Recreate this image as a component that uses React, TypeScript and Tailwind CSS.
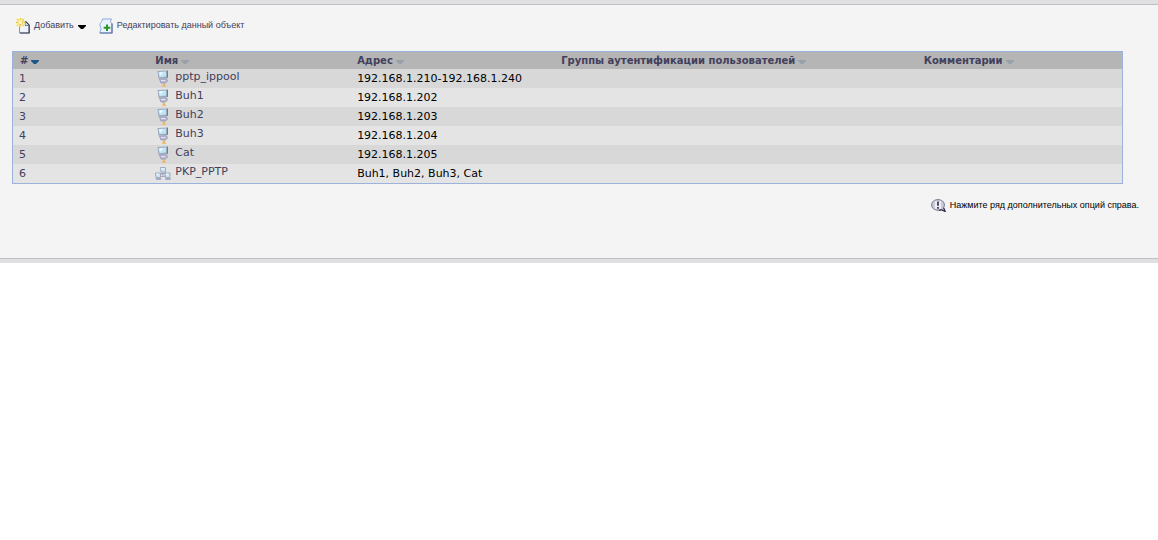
import React from "react";

type Kind = "host" | "group";
type Row = { id: number; kind: Kind; name: string; address: string };

const rows: Row[] = [
  { id: 1, kind: "host", name: "pptp_ippool", address: "192.168.1.210-192.168.1.240" },
  { id: 2, kind: "host", name: "Buh1", address: "192.168.1.202" },
  { id: 3, kind: "host", name: "Buh2", address: "192.168.1.203" },
  { id: 4, kind: "host", name: "Buh3", address: "192.168.1.204" },
  { id: 5, kind: "host", name: "Cat", address: "192.168.1.205" },
  { id: 6, kind: "group", name: "PKP_PPTP", address: "Buh1, Buh2, Buh3, Cat" },
];

const columns = [
  { label: "#", width: "w-[12.2%]", active: true },
  { label: "Имя", width: "w-[18.2%]", active: false },
  { label: "Адрес", width: "w-[18.4%]", active: false },
  { label: "Группы аутентификации пользователей", width: "w-[32.7%]", active: false },
  { label: "Комментарии", width: "w-[18.5%]", active: false },
];

function Arrow({ className }: { className: string }) {
  return (
    <svg viewBox="0 0 8 4" className={`h-1 w-2 shrink-0 fill-current ${className}`} aria-hidden="true">
      <path d="M0 0h8v1L5 4H3L0 1z" />
    </svg>
  );
}

function NewIcon() {
  return (
    <svg viewBox="0 0 14 16" className="h-4 w-3.5 shrink-0" aria-hidden="true">
      <path d="M3.5 3.5h6l3.500 3v8.500h-9.500z" fill="#eff3fa" stroke="#8796b5" />
      <path d="M9.500 3.500l3.700 3.700v7.800H4" fill="none" stroke="#3a4158" strokeWidth="1.200" />
      <path d="M9 4v3.500h3.500" fill="#d0d9ea" stroke="#5b6680" strokeWidth=".8" />
      <path d="M0 0h9v9H0z" fill="#faf3c4" opacity=".7" />
      <path d="M4.500 0v9M0 4.500h9M1.200 1.200l6.600 6.600M7.800 1.200L1.200 7.800" stroke="#ecc93e" strokeWidth="1.400" strokeDasharray="2 .7" />
      <circle cx="4.500" cy="4.500" r="1.800" fill="#fff7ae" />
    </svg>
  );
}

function EditIcon() {
  return (
    <svg viewBox="0 0 14 16" className="h-4 w-3.5 shrink-0" aria-hidden="true">
      <path d="M3.500 1h9c-.8 1-.8 2-.8 3.500l1.300 1V15H.8c-.8-1 1.700-2.500 1.200-4.500S.3 7 1.200 5.500 3.700 2.500 3.500 1z" fill="#eaf2fd" stroke="#8ba9da" />
      <path d="M13 5.500V15H1" fill="none" stroke="#58709f" strokeWidth="1.200" />
      <path d="M8 6.500v6.500M4.700 9.700h6.600" stroke="#2a9428" strokeWidth="2" />
    </svg>
  );
}

function HostIcon() {
  return (
    <svg viewBox="0 0 12 17" className="h-[17px] w-3 shrink-0" aria-hidden="true">
      <path d="M.5 1L11 .5V8l-9.500.8z" fill="#9aa8bd" />
      <path d="M1.500 2l7.500-.4v5L2.500 7.200z" fill="#bfe6f5" />
      <path d="M2.300 2.500l4-.2-3.300 3.400z" fill="#f0fbff" />
      <path d="M10 1v7l1-.5v-7z" fill="#707d92" />
      <path d="M2.500 9.200l7-.5 1 2.300-2 2H4z" fill="#b9bbd2" stroke="#9192b3" strokeWidth=".8" />
      <path d="M4 10.500h4" stroke="#e4e4f2" />
      <path d="M7 12.800v1.500" stroke="#c89b58" />
      <path d="M7 13.200l2.300 3.500H4.700z" fill="#f1b45e" />
    </svg>
  );
}

function MiniHost() {
  return (
    <>
      <path d="M.5 0h5v4.500H1z" fill="#c8e6f4" stroke="#98a5ba" strokeWidth=".9" />
      <path d="M1.500 1.200h2.200" stroke="#fff" />
      <path d="M.8 6h5.400" stroke="#a3a5c2" strokeWidth="1.800" />
    </>
  );
}

function GroupIcon() {
  return (
    <svg viewBox="0 0 16 14" className="h-3.5 w-4 shrink-0" aria-hidden="true">
      <path d="M8 7v2M4 9.500h8" stroke="#a7a9bb" />
      <g transform="translate(5 .5)"><MiniHost /></g>
      <g transform="translate(0 6)"><MiniHost /></g>
      <g transform="translate(9.500 6)"><MiniHost /></g>
    </svg>
  );
}

function HintIcon() {
  return (
    <svg viewBox="0 0 15 13" className="h-[13px] w-[15px] shrink-0" aria-hidden="true">
      <path d="M7 .6C3.300.6.6 2.900.6 5.900s2.700 5.300 6.400 5.300c1.200 0 2.300-.2 3.200-.7l3.800 1.700-1.500-3.600c.6-.8.900-1.700.9-2.700C13.400 2.900 10.700.6 7 .6z" fill="#c9c9d8" stroke="#77778e" />
      <path d="M8 11.500l2.200-.7 4 1.700-1.600-3.800" fill="none" stroke="#292941" strokeWidth="1.100" />
      <path d="M4 2.200h6v7.600H4z" fill="#eeeef5" />
      <path d="M7 2.500v4.200M7 8v1.700" stroke="#3c3c55" strokeWidth="1.800" />
    </svg>
  );
}

export default function App() {
  return (
    <main className="w-full border-y-4 border-[#e0e0e2] bg-[#f4f4f4] font-['DejaVu_Sans',sans-serif] text-[11px] text-[#42405c]">
      <div className="border-y border-[#c0c0c0] pt-3 pr-[19px] pb-11 pl-3">
        <div className="flex h-[18px] items-start gap-[13px] pl-1 font-['Liberation_Sans',sans-serif] text-[9px] leading-4">
          <button type="button" className="flex items-start gap-1">
            <span className="pt-px"><NewIcon /></span>
            <span>Добавить</span>
            <span className="pt-2"><Arrow className="text-black" /></span>
          </button>
          <button type="button" className="flex items-start gap-1">
            <span className="pt-px"><EditIcon /></span>
            <span>Редактировать данный объект</span>
          </button>
        </div>

        <div className="mt-4 mr-4 border border-[#9bb3dc]">
          <table className="w-full table-fixed border-collapse">
            <thead>
              <tr className="h-[17px] bg-[#b5b5b5]">
                {columns.map((c) => (
                  <th key={c.label} scope="col" className={`p-0 pl-[7px] text-left ${c.width}`}>
                    <button type="button" className="flex h-[17px] items-center gap-[3px] text-[10px] font-bold whitespace-nowrap">
                      {c.label}
                      <Arrow className={c.active ? "mt-0.5 text-[#1d5688]" : "mt-0.5 text-[#98a1aa]"} />
                    </button>
                  </th>
                ))}
              </tr>
            </thead>
            <tbody>
              {rows.map((r) => (
                <tr key={r.id} className="h-[19px] odd:bg-[#d8d8d8] even:bg-[#e4e4e4]">
                  <td className="p-0 pl-1.5 leading-[19px]">{r.id}</td>
                  <td className="p-0 pl-[7px]">
                    <a href={`#${r.name}`} className="flex h-[19px] items-center gap-1 leading-4">
                      <span className="flex w-4 justify-center">
                        {r.kind === "host" ? <HostIcon /> : <GroupIcon />}
                      </span>
                      <span className="pb-[3px]">{r.name}</span>
                    </a>
                  </td>
                  <td className="p-0 pl-[7px] leading-[19px] text-black">{r.address}</td>
                  <td className="p-0" />
                  <td className="p-0" />
                </tr>
              ))}
            </tbody>
          </table>
        </div>

        <p className="mt-[13px] mb-px flex items-start justify-end gap-1 font-['Liberation_Sans',sans-serif] text-[9px] leading-4 text-black">
          <span className="pt-0.5"><HintIcon /></span>
          Нажмите ряд дополнительных опций справа.
        </p>
      </div>
    </main>
  );
}
